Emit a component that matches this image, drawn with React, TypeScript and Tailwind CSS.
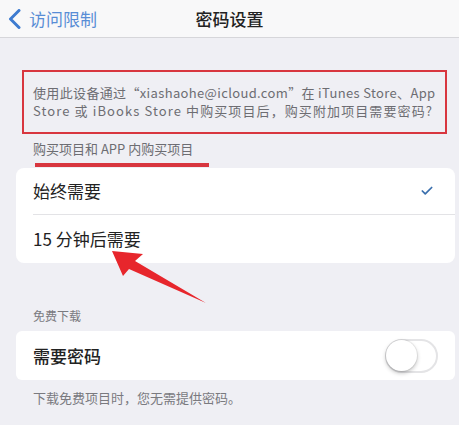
import { Check } from 'lucide-react';

const font = { fontFamily: '"Noto Sans CJK SC", "Noto Sans", sans-serif' };

const Toggle = () => (
  <div className="relative w-[53px] h-[34px] rounded-full border-2 border-[#e4e4e6] bg-white">
    <div className="absolute -left-[1px] -top-[1px] w-[31px] h-[31px] rounded-full bg-white shadow-[0_2px_4px_rgba(0,0,0,0.25),0_0_0_1px_rgba(0,0,0,0.06)]" />
  </div>
);

export default function App() {
  return (
    <div lang="zh-CN" className="relative w-[459px] h-[425px] bg-[#efeff4] overflow-hidden" style={font}>
      {/* Navigation bar */}
      <div className="relative flex items-center h-[38px] bg-[#f8f8f9] border-b border-[#d6d6da]">
        <div className="flex items-center text-[#3d7bd0] pl-[8px]">
          <svg width="13" height="20" viewBox="0 0 13 20" fill="none">
            <path d="M11 1.5 L2.5 10 L11 18.5" stroke="currentColor" strokeWidth="3" strokeLinecap="round" strokeLinejoin="round" />
          </svg>
          <span className="text-[17px] ml-[8px] opacity-85">访问限制</span>
        </div>
        <div className="absolute left-0 right-0 text-center text-[17px] font-medium text-[#222] pointer-events-none">
          密码设置
        </div>
      </div>

      {/* Description note */}
      <div className="mt-[32px] ml-[22px] w-[425px] border-2 border-[#d8363f] pl-[9px] pr-[9px] pt-[12px] pb-[12px] text-[13px] leading-[18px] text-[#6d6d72] whitespace-nowrap">
        <div className="tracking-[0.35px]">使用此设备通过“xiashaohe@icloud.com”在 iTunes Store、App</div>
        <div className="tracking-[1.1px]">Store 或 iBooks Store 中购买项目后，购买附加项目需要密码?</div>
      </div>

      {/* Purchases section */}
      <div className="ml-[33px] mt-[6px] text-[13px] leading-[18px] text-[#6d6d72]">购买项目和 APP 内购买项目</div>
      <div className="ml-[35px] mt-[5px] w-[174px] h-[4px] bg-[#d8363f]" />
      <div className="ml-4 mr-1 mt-px bg-white rounded-lg">
        <div className="flex items-center justify-between h-[46px] pl-[17px] pr-[21px]">
          <span className="text-[17px] text-[#222]">始终需要</span>
          <Check className="w-[14px] h-[14px] text-[#3a6fad]" strokeWidth={3} />
        </div>
        <div className="ml-[17px] h-px bg-[#e3e3e6]" />
        <div className="flex items-center h-[48px] pl-[17px]">
          <span className="text-[17px] text-[#222]">15 分钟后需要</span>
        </div>
      </div>

      {/* Free downloads section */}
      <div className="ml-[33px] mt-[45px] text-[12px] leading-[16px] text-[#7a7a7f]">免费下载</div>
      <div className="ml-4 mr-1 mt-[7px] flex items-center justify-between h-[49px] bg-white rounded-md pl-[17px] pr-[17px]">
        <span className="text-[17px] font-medium text-[#222]">需要密码</span>
        <Toggle />
      </div>
      <div className="ml-[33px] mt-[9px] text-[13px] leading-[18px] text-[#7a7a7f]">下载免费项目时，您无需提供密码。</div>

      {/* Red pointer arrow */}
      <svg className="absolute left-0 top-0 pointer-events-none" width="459" height="425" viewBox="0 0 459 425">
        <polygon
          points="112,251 143,254 135,261 206,303 129,269 123,276"
          fill="#e7262c"
        />
      </svg>
    </div>
  );
}
